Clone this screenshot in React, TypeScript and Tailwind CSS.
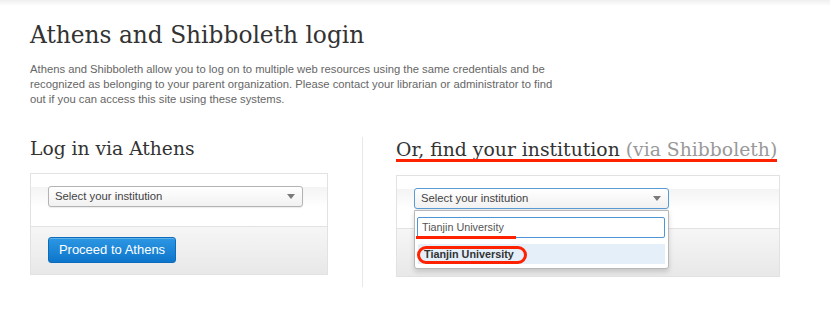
import React from "react";

const serif = { fontFamily: '"DejaVu Serif", Georgia, serif' };
const sans = { fontFamily: '"Liberation Sans", Arial, Helvetica, sans-serif' };

function Arrow() {
  return (
    <svg width="8" height="5" viewBox="0 0 8 5" className="block">
      <path d="M0 0 L8 0 L4 5 Z" fill="#7a7a7a" />
    </svg>
  );
}

function SelectBox({ focused }: { focused?: boolean }) {
  return (
    <div
      className={
        "h-[21px] w-[255px] rounded-[3px] border flex items-center justify-between pl-[6px] pr-[7px] text-[11.3px] text-[#444] bg-[linear-gradient(to_bottom,#ffffff,#f1f1f1)] shadow-[0_1px_1px_rgba(0,0,0,0.08)] " +
        (focused ? "border-[#5a9bd5]" : "border-[#b3b3b3]")
      }
      style={sans}
    >
      <span>Select your institution</span>
      <Arrow />
    </div>
  );
}

function PanelTop({ children }: { children: React.ReactNode }) {
  return (
    <div className="pt-[12px] pb-[19px] pl-[17px] border-b border-[#e2e2e2] bg-[linear-gradient(to_bottom,#ffffff_0,#ffffff_13px,#f4f4f4_13px,#ffffff_34px)]">
      {children}
    </div>
  );
}

function PanelBottom({ children }: { children?: React.ReactNode }) {
  return (
    <div className="h-[47px] pt-[10px] pl-[17px] bg-[linear-gradient(to_bottom,#f6f6f6,#e8e8e8)]">
      {children}
    </div>
  );
}

export default function App() {
  return (
    <div className="w-[830px] h-[320px] bg-white overflow-hidden">
      <div className="h-[6px] bg-[linear-gradient(to_bottom,#efefef,#ffffff)]" />
      <div className="pl-[30px]">
        <h1
          className="mt-[15px] text-[23.3px] leading-[28px] text-[#333]"
          style={serif}
        >
          Athens and Shibboleth login
        </h1>
        <p
          className="mt-[13px] w-[528px] text-[11.25px] leading-[15px] text-[#666]"
          style={sans}
        >
          Athens and Shibboleth allow you to log on to multiple web resources
          using the same credentials and be recognized as belonging to your
          parent organization. Please contact your librarian or administrator
          to find out if you can access this site using these systems.
        </p>

        <div className="mt-[31px] flex items-start">
          {/* Left column */}
          <div className="w-[298px]">
            <h2
              className="text-[18.7px] leading-[22px] text-[#333]"
              style={serif}
            >
              Log in via Athens
            </h2>
            <div className="mt-[13px] border border-[#e2e2e2]">
              <PanelTop>
                <SelectBox />
              </PanelTop>
              <PanelBottom>
                <button
                  className="h-[26px] w-[128px] rounded-[3px] border border-[#0b6cbd] bg-[linear-gradient(to_bottom,#2c97e3,#0e76cb)] text-white text-[13px] flex items-center justify-center shadow-[inset_0_1px_0_rgba(255,255,255,0.25)]"
                  style={sans}
                >
                  Proceed to Athens
                </button>
              </PanelBottom>
            </div>
          </div>

          {/* Divider */}
          <div className="w-px h-[150px] bg-[#e8e8e8] ml-[34px] mr-[33px] -mt-[1px]" />

          {/* Right column */}
          <div className="w-[384px]">
            <div className="relative inline-block">
              <h2
                className="text-[18.8px] leading-[22px] text-[#333] whitespace-nowrap"
                style={serif}
              >
                Or, find your institution{" "}
                <span className="text-[#999]">(via Shibboleth)</span>
              </h2>
              <div className="absolute left-0 right-0 top-[20px] h-[3px] bg-[#ff2200]" />
            </div>
            <div className="mt-[13px] border border-[#e2e2e2]">
              <PanelTop>
                <div className="relative w-[255px]">
                  <SelectBox focused />
                  <div
                    className="absolute left-0 top-[22px] w-[255px] h-[59px] bg-white border border-[#b8b8b8] rounded-b-[3px] shadow-[0_3px_5px_rgba(0,0,0,0.15)] pt-[6px] pl-[2px] pr-[3px] z-10"
                    style={sans}
                  >
                    <div className="relative h-[21px] w-[248px] border-[1.5px] border-[#4d95d6] rounded-[2px] pl-[4px] flex items-center text-[10.8px] text-[#555] bg-white">
                      Tianjin University
                      <div className="absolute left-[-2px] top-[18px] w-[100px] h-[3px] bg-[#ff2200]" />
                    </div>
                    <div className="relative mt-[6px] ml-[1px] h-[20px] w-[247px] bg-[#e5eff9] pl-[6px] flex items-center text-[10.8px] font-bold text-[#333]">
                      Tianjin University
                      <div className="absolute left-[-1px] top-[2px] w-[110px] h-[18px] rounded-full border-[3px] border-[#ff2200]" />
                    </div>
                  </div>
                </div>
              </PanelTop>
              <PanelBottom />
            </div>
          </div>
        </div>
      </div>
    </div>
  );
}
